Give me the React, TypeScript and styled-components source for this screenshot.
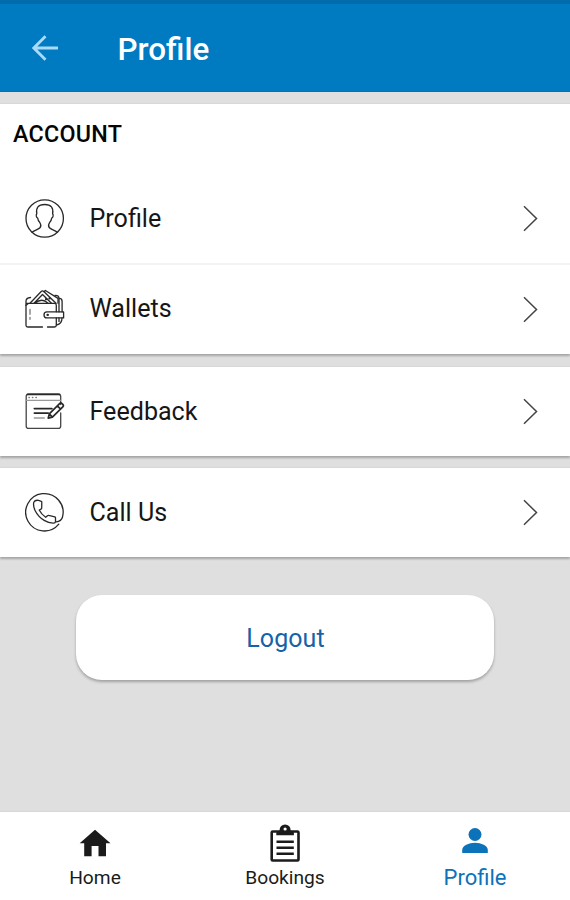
import React from "react";
import styled, { createGlobalStyle } from "styled-components";

const GlobalStyle = createGlobalStyle`
  * { box-sizing: border-box; }
  body { margin: 0; background: #dfdfdf; font-family: Roboto, "Liberation Sans", sans-serif; }
  button { font: inherit; border: 0; padding: 0; background: none; cursor: pointer; }
`;

const Screen = styled.div`
  display: flex;
  flex-direction: column;
  height: 900px;
  width: 100%;
  overflow: hidden;
  background: #dfdfdf;
`;

const Header = styled.header`
  display: flex;
  align-items: center;
  flex: none;
  height: 92px;
  padding: 4px 0 0 30px;
  background: #007ac1;
  border-top: 4px solid #006cab;
  border-bottom: 1px solid #0872b0;
`;

const BackButton = styled.button`
  display: flex;
  width: 30px;
  height: 30px;
  margin: -3px 57.5px 0 0;
  color: #a9dbf8;
`;

const Title = styled.h1`
  margin: 0;
  color: #fff;
  font-size: 31.4px;
  font-weight: 500;
  line-height: 40px;
`;

const Content = styled.main`
  display: flex;
  flex-direction: column;
  flex: 1;
  padding-top: 12px;
`;

const Card = styled.section<{ $gap?: number }>`
  background: #fff;
  margin-bottom: ${(p) => p.$gap ?? 12}px;
  box-shadow: 0 2px 2px rgba(0, 0, 0, 0.26), 0 -1px 1px rgba(0, 0, 0, 0.03);
`;

const SectionHeading = styled.h2`
  margin: 0;
  height: 70px;
  padding: 16px 0 0 13px;
  color: #050505;
  font-size: 23.3px;
  font-weight: 500;
  line-height: 29px;
  letter-spacing: 0.25px;
`;

const Row = styled.div<{ $height?: number; $divided?: boolean }>`
  display: flex;
  align-items: center;
  height: ${(p) => p.$height ?? 89}px;
  padding: 0 32px 0 25px;
  border-bottom: ${(p) => (p.$divided ? "2px solid #f3f3f3" : "0")};
`;

const RowIcon = styled.svg`
  display: block;
  width: 40px;
  height: 40px;
  margin: -1px 24.5px 0 0;
  fill: none;
  stroke: #292929;
  stroke-width: 1.3;
  stroke-linecap: round;
  stroke-linejoin: round;
`;

const RowLabel = styled.span<{ $offset?: number }>`
  flex: 1;
  color: #161616;
  font-size: 25.1px;
  line-height: 30px;
  margin-top: ${(p) => p.$offset ?? 1}px;
`;

const Chevron = styled.svg`
  width: 15px;
  height: 28px;
  margin-top: -2px;
  fill: none;
  stroke: #444;
  stroke-width: 1.5;
`;

const LogoutButton = styled.button`
  align-self: center;
  width: 418px;
  height: 85px;
  padding: 2px 0 0 1px;
  border-radius: 26px;
  background: #fff;
  color: #1463a8;
  font-size: 25px;
  letter-spacing: 0.1px;
  box-shadow: 0 2px 3px rgba(0, 0, 0, 0.28);
`;

const BottomNav = styled.nav`
  display: grid;
  grid-template-columns: repeat(3, 1fr);
  flex: none;
  height: 88px;
  background: #fff;
  box-shadow: 0 -1px 1px rgba(0, 0, 0, 0.03);
`;

const NavItem = styled.button<{ $active?: boolean }>`
  display: flex;
  flex-direction: column;
  align-items: center;
  justify-content: flex-start;
  padding-top: ${(p) => (p.$active ? 9 : 12)}px;
  color: ${(p) => (p.$active ? "#0c72b9" : "#1b1b1b")};
`;

const NavLabel = styled.span<{ $active?: boolean }>`
  font-size: ${(p) => (p.$active ? 22 : 19.2)}px;
  line-height: 26px;
  margin-top: ${(p) => (p.$active ? 5 : 2)}px;
`;

const Arrow = () => (
  <Chevron viewBox="0 0 15 28"><path d="M1 2.3 13.5 14.5 1 26.7" /></Chevron>
);

const PersonOutline = () => (
  <RowIcon viewBox="0 0 40 40">
    <circle cx="19.7" cy="20.5" r="18.7" />
    <path d="M7 34.2c2.8-2.2 6.5-2.7 8-4.4 1.1-1.4.8-3.8-.2-5.3-1.3-1.3-1.9-2.8-2.1-4.4-1.5-.8-1.9-3.2-.9-4.3-1.1-6.1 1.5-9.3 7.9-9.3s9 3.2 7.9 9.3c1 1.1.6 3.5-.9 4.3-.2 1.6-.8 3.1-2.1 4.4-1 1.5-1.3 3.9-.2 5.3 1.5 1.7 5.2 2.2 8 4.4" />
  </RowIcon>
);

const WalletIcon = () => (
  <RowIcon viewBox="0 0 40 40">
    <path d="M2 14.4h27.5q1.8 0 1.8 1.8v6.6M31.3 29v7.2q0 1.8-1.8 1.8h-7M17.5 38H3q-2 0-2-2V12.3q0-3.5 4.5-3.8" />
    <path d="M5 14.2 16.2 2.5q1.3-1.3 2.6 0L31 14.2M9 14.2 17.5 5.5l9 8.7M18.8 2.8l1.6-1.3L33 9.4v4.8M10 14.2q7-6 13 0" />
    <path d="M30 6.4q4-.4 4 3.5v13M34.5 9.4q2.6 0 2.6 3v10.5M37 29q0 6-5.5 7M34 29v3.4" />
    <path d="M38.6 22.9H22q-3 0-3 3t3 3h16.6ZM1 16.3l2-1.5" />
    <path d="M5 20.3v5m0 3v2" stroke="#777" />
    <path d="M21 10.2h.3M24.5 9.4h.2M22.5 25.9h.4" strokeWidth="2.2" />
  </RowIcon>
);

const FeedbackIcon = () => (
  <RowIcon viewBox="0 0 40 40">
    <g transform="translate(0 1.6)">
      <path d="M35.7 12V4q0-2.5-2.5-2.5H3.7Q1.2 1.5 1.2 4v29.3q0 2.5 2.5 2.5h29.5q2.5 0 2.5-2.5v-13" stroke="#444" />
      <path d="M2.5 1.8h32" strokeWidth="1.8" />
      <path d="M1.5 7.7h34" stroke="#999" />
      <path d="M4 5h.3M7.5 5h.3M11 5h.3" stroke="#777" strokeWidth="1.5" />
      <path d="M9.4 16h17.5M9.4 20.5h13.8" strokeWidth="1.8" />
      <path d="M9.4 25.4h9.8" stroke="#999" strokeWidth="1.5" />
      <path d="m23.2 25.5 1.1-4.2L34.6 11q1.2-1.2 2.4 0l.8.8q1.2 1.2 0 2.4L27.4 24.5Zm9.2-12.2 3.2 3.2m-11.3 4.8 3.1 3.2" strokeWidth="1.7" />
    </g>
  </RowIcon>
);

const CallIcon = () => (
  <RowIcon viewBox="0 0 40 40">
    <path d="M33.8 32.2A18.7 18.7 0 1 1 37.5 25q-1.1 4.4-6.3 4.8" />
    <path d="M8.8 10.2q1.3-2.5 4.7-1.8l2.8.9q.5.2.5.8l-.1 6q0 .8-.7 1.1l-1.8.8q2.1 4.2 6.5 7.3l1.8-1.6q.6-.5 1.3-.3l6 1.4q.7.2.7 1v3.8q-.1 1.4-1.8 1.5-4.8.2-9.5-2.7-5.9-3.5-9-9.7-2.3-4.6-1.4-8.5Z" />
  </RowIcon>
);

export default function App() {
  return (
    <>
      <GlobalStyle />
      <Screen>
        <Header>
          <BackButton aria-label="Back">
            <svg width="30" height="30" viewBox="0 0 30 30" fill="none" stroke="currentColor" strokeWidth="2.9">
              <path d="M28 15H4M15.5 3.3 3.8 15l11.7 11.7" />
            </svg>
          </BackButton>
          <Title>Profile</Title>
        </Header>
        <Content>
          <Card $gap={13}>
            <SectionHeading>ACCOUNT</SectionHeading>
            <Row $height={91} $divided>
              <PersonOutline /><RowLabel>Profile</RowLabel><Arrow />
            </Row>
            <Row>
              <WalletIcon /><RowLabel $offset={-1}>Wallets</RowLabel><Arrow />
            </Row>
          </Card>
          <Card>
            <Row>
              <FeedbackIcon /><RowLabel>Feedback</RowLabel><Arrow />
            </Row>
          </Card>
          <Card $gap={38}>
            <Row>
              <CallIcon /><RowLabel>Call Us</RowLabel><Arrow />
            </Row>
          </Card>
          <LogoutButton>Logout</LogoutButton>
        </Content>
        <BottomNav>
          <NavItem>
            <svg width="38" height="39" viewBox="0 0 38 39" fill="currentColor">
              <path d="M19 5.7 34.5 19.2H30V32.3H22.5V22H15.6V32.3H8.2V19.2H3.7Z" />
            </svg>
            <NavLabel>Home</NavLabel>
          </NavItem>
          <NavItem>
            <svg width="38" height="39" viewBox="0 0 38 39">
              <rect x="5.7" y="7.5" width="26.8" height="29" rx="1" fill="none" stroke="currentColor" strokeWidth="2.6" />
              <path d="M10.3 11.3V8.5l4.3-2.8a4.7 4.7 0 0 1 9 0l4.3 2.8v2.8Z" fill="currentColor" />
              <path d="M14.7 6a4.4 4.4 0 0 1 8.8 0" fill="none" stroke="currentColor" strokeWidth="2.2" />
              <circle cx="19.1" cy="5" r="1.6" fill="#fff" />
              <path d="M10.5 17.8h17.3M10.5 23.8h17.3M10.5 29.8h17.3" stroke="currentColor" strokeWidth="2.5" />
            </svg>
            <NavLabel>Bookings</NavLabel>
          </NavItem>
          <NavItem $active>
            <svg width="38" height="39" viewBox="0 0 38 39" fill="currentColor">
              <circle cx="19" cy="13.5" r="6.5" />
              <path d="M6.2 32V29c0-4.2 6.6-7.2 12.8-7.2s12.8 3 12.8 7.2v3Z" />
            </svg>
            <NavLabel $active>Profile</NavLabel>
          </NavItem>
        </BottomNav>
      </Screen>
    </>
  );
}
